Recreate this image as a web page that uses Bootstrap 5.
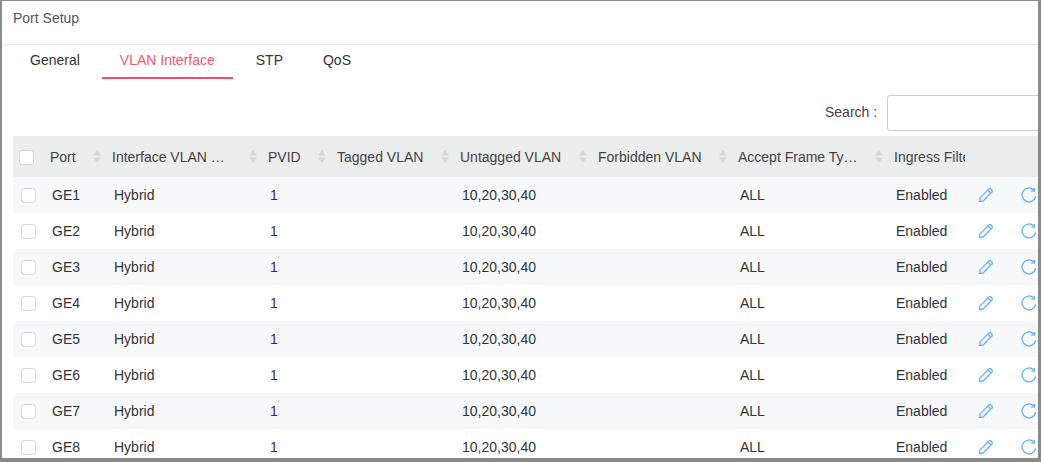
<!DOCTYPE html>
<html lang="en">
<head>
<meta charset="utf-8">
<title>Port Setup</title>
<link href="https://cdn.jsdelivr.net/npm/bootstrap@5.3.0/dist/css/bootstrap.min.css" rel="stylesheet">
<style>
html,body{height:100%;margin:0;overflow:hidden;background:#fff}
body{font-family:"Liberation Sans",Arial,sans-serif;font-size:14px;color:#333}
.frame{height:462px;border-style:solid;border-color:#8a8a8a;border-width:1px 3px 4px 2px;overflow:hidden;background:#fff}
.head-title{height:44px;padding:7px 0 0 11px;color:#555;font-size:14px;line-height:20px;margin-left:2px;border-bottom:1px solid #e8e8e8}
.head-title span{margin-left:-2px}
.tab-row{padding-left:10px;gap:4px;height:34px}
.tab-row .nav-link{padding:6px 18px 0;height:34px;line-height:19px;color:#333;font-size:14px;border-bottom:2px solid transparent}
.tab-row .nav-link.active{color:#ef5a70;border-bottom-color:#ee4f66;margin-right:1px}
.find-row{height:36px;margin-top:16px;gap:10px;justify-content:flex-start;padding-left:823px}
.find-row label{color:#444;white-space:nowrap;flex:none;padding-bottom:2px}
.find-box{width:320px;height:36px;flex:none;border:1px solid #ccc;border-radius:3px;box-shadow:none}
.port-table{table-layout:fixed;width:1100px;margin:5px 0 0 11px;border-collapse:collapse}
.port-table th{height:41px;background:#eceded;font-weight:400;color:#444;padding:2px 8px 0;white-space:nowrap;overflow:hidden}
.port-table td{height:36px;padding:0 10px;color:#333;white-space:nowrap;border:0}
.port-table tr.alt td{background:#f7f8fa}
.port-table th.sel{padding-left:6px}
.port-table td.sel{padding-left:8px}
.port-table td.act{padding:0}
.tick{width:15px;height:15px;margin:0;display:block;border:1px solid #d4d4d4;border-radius:3px;background:#fff}
.th-in{display:flex;align-items:center;justify-content:space-between}
.th-txt{overflow:hidden;white-space:nowrap}
.sorter{flex:none;width:8px;height:13px;margin-right:-5px;margin-top:-2px;color:#d8d8d8}
.acts{display:flex;gap:27px;padding-left:5px;align-items:center}
.acts svg{display:block;flex:none;width:16px;height:16px;fill:none;stroke:#6db5f5;stroke-width:1.4}
</style>
</head>
<body>
<div class="frame">
  <div class="head-title"><span>Port Setup</span></div>
  <nav class="nav tab-row">
    <a class="nav-link" href="#">General</a>
    <a class="nav-link active" href="#">VLAN Interface</a>
    <a class="nav-link" href="#">STP</a>
    <a class="nav-link" href="#">QoS</a>
  </nav>
  <div class="d-flex align-items-center find-row">
    <label for="q">Search :</label>
    <input id="q" class="form-control find-box" type="text">
  </div>
  <table class="port-table">
    <colgroup><col style="width:29px"><col style="width:62px"><col style="width:156px"><col style="width:69px"><col style="width:123px"><col style="width:138px"><col style="width:140px"><col style="width:156px"><col style="width:87px"><col style="width:140px"></colgroup>
    <thead><tr>
      <th class="sel"><input class="form-check-input tick" type="checkbox" aria-label="Select all"></th>
      <th><div class="th-in"><span class="th-txt">Port</span><svg class="sorter" viewBox="0 0 8 13"><path fill="currentColor" d="M4 0l4 5.500H0zM4 13L0 7.500h8z"/></svg></div></th>
      <th><div class="th-in"><span class="th-txt">Interface VLAN …</span><svg class="sorter" viewBox="0 0 8 13"><path fill="currentColor" d="M4 0l4 5.500H0zM4 13L0 7.500h8z"/></svg></div></th>
      <th><div class="th-in"><span class="th-txt">PVID</span><svg class="sorter" viewBox="0 0 8 13"><path fill="currentColor" d="M4 0l4 5.500H0zM4 13L0 7.500h8z"/></svg></div></th>
      <th><div class="th-in"><span class="th-txt">Tagged VLAN</span><svg class="sorter" viewBox="0 0 8 13"><path fill="currentColor" d="M4 0l4 5.500H0zM4 13L0 7.500h8z"/></svg></div></th>
      <th><div class="th-in"><span class="th-txt">Untagged VLAN</span><svg class="sorter" viewBox="0 0 8 13"><path fill="currentColor" d="M4 0l4 5.500H0zM4 13L0 7.500h8z"/></svg></div></th>
      <th><div class="th-in"><span class="th-txt">Forbidden VLAN</span><svg class="sorter" viewBox="0 0 8 13"><path fill="currentColor" d="M4 0l4 5.500H0zM4 13L0 7.500h8z"/></svg></div></th>
      <th><div class="th-in"><span class="th-txt">Accept Frame Ty…</span><svg class="sorter" viewBox="0 0 8 13"><path fill="currentColor" d="M4 0l4 5.500H0zM4 13L0 7.500h8z"/></svg></div></th>
      <th><div class="th-in"><span class="th-txt">Ingress Filter</span></div></th>
      <th></th>
    </tr></thead>
    <tbody>
      <tr class="alt"><td class="sel"><input class="form-check-input tick" type="checkbox" aria-label="GE1"></td><td>GE1</td><td>Hybrid</td><td>1</td><td></td><td>10,20,30,40</td><td></td><td>ALL</td><td>Enabled</td><td class="act"><div class="acts"><svg viewBox="0 0 16 16"><path d="M1.500 14.500l.5-3.500 8.900-8.900a1.500 1.500 0 0 1 2.100 0l.9.9a1.500 1.500 0 0 1 0 2.100L5 14zM10 3.200l2.800 2.800"/></svg><svg viewBox="0 0 16 16"><path d="M14.700 9.500A6.900 6.900 0 1 1 12.800 3M13.400 .8v3.300h-3.300"/></svg></div></td></tr>
      <tr><td class="sel"><input class="form-check-input tick" type="checkbox" aria-label="GE2"></td><td>GE2</td><td>Hybrid</td><td>1</td><td></td><td>10,20,30,40</td><td></td><td>ALL</td><td>Enabled</td><td class="act"><div class="acts"><svg viewBox="0 0 16 16"><path d="M1.500 14.500l.5-3.500 8.900-8.900a1.500 1.500 0 0 1 2.100 0l.9.9a1.500 1.500 0 0 1 0 2.100L5 14zM10 3.200l2.800 2.800"/></svg><svg viewBox="0 0 16 16"><path d="M14.700 9.500A6.900 6.900 0 1 1 12.800 3M13.400 .8v3.300h-3.300"/></svg></div></td></tr>
      <tr class="alt"><td class="sel"><input class="form-check-input tick" type="checkbox" aria-label="GE3"></td><td>GE3</td><td>Hybrid</td><td>1</td><td></td><td>10,20,30,40</td><td></td><td>ALL</td><td>Enabled</td><td class="act"><div class="acts"><svg viewBox="0 0 16 16"><path d="M1.500 14.500l.5-3.500 8.900-8.900a1.500 1.500 0 0 1 2.100 0l.9.9a1.500 1.500 0 0 1 0 2.100L5 14zM10 3.200l2.800 2.800"/></svg><svg viewBox="0 0 16 16"><path d="M14.700 9.500A6.900 6.900 0 1 1 12.800 3M13.400 .8v3.300h-3.300"/></svg></div></td></tr>
      <tr><td class="sel"><input class="form-check-input tick" type="checkbox" aria-label="GE4"></td><td>GE4</td><td>Hybrid</td><td>1</td><td></td><td>10,20,30,40</td><td></td><td>ALL</td><td>Enabled</td><td class="act"><div class="acts"><svg viewBox="0 0 16 16"><path d="M1.500 14.500l.5-3.500 8.900-8.900a1.500 1.500 0 0 1 2.100 0l.9.9a1.500 1.500 0 0 1 0 2.100L5 14zM10 3.200l2.800 2.800"/></svg><svg viewBox="0 0 16 16"><path d="M14.700 9.500A6.900 6.900 0 1 1 12.800 3M13.400 .8v3.300h-3.300"/></svg></div></td></tr>
      <tr class="alt"><td class="sel"><input class="form-check-input tick" type="checkbox" aria-label="GE5"></td><td>GE5</td><td>Hybrid</td><td>1</td><td></td><td>10,20,30,40</td><td></td><td>ALL</td><td>Enabled</td><td class="act"><div class="acts"><svg viewBox="0 0 16 16"><path d="M1.500 14.500l.5-3.500 8.900-8.900a1.500 1.500 0 0 1 2.100 0l.9.9a1.500 1.500 0 0 1 0 2.100L5 14zM10 3.200l2.800 2.800"/></svg><svg viewBox="0 0 16 16"><path d="M14.700 9.500A6.900 6.900 0 1 1 12.800 3M13.400 .8v3.300h-3.300"/></svg></div></td></tr>
      <tr><td class="sel"><input class="form-check-input tick" type="checkbox" aria-label="GE6"></td><td>GE6</td><td>Hybrid</td><td>1</td><td></td><td>10,20,30,40</td><td></td><td>ALL</td><td>Enabled</td><td class="act"><div class="acts"><svg viewBox="0 0 16 16"><path d="M1.500 14.500l.5-3.500 8.900-8.900a1.500 1.500 0 0 1 2.100 0l.9.9a1.500 1.500 0 0 1 0 2.100L5 14zM10 3.200l2.800 2.800"/></svg><svg viewBox="0 0 16 16"><path d="M14.700 9.500A6.900 6.900 0 1 1 12.800 3M13.400 .8v3.300h-3.300"/></svg></div></td></tr>
      <tr class="alt"><td class="sel"><input class="form-check-input tick" type="checkbox" aria-label="GE7"></td><td>GE7</td><td>Hybrid</td><td>1</td><td></td><td>10,20,30,40</td><td></td><td>ALL</td><td>Enabled</td><td class="act"><div class="acts"><svg viewBox="0 0 16 16"><path d="M1.500 14.500l.5-3.500 8.900-8.900a1.500 1.500 0 0 1 2.100 0l.9.9a1.500 1.500 0 0 1 0 2.100L5 14zM10 3.200l2.800 2.800"/></svg><svg viewBox="0 0 16 16"><path d="M14.700 9.500A6.900 6.900 0 1 1 12.800 3M13.400 .8v3.300h-3.300"/></svg></div></td></tr>
      <tr><td class="sel"><input class="form-check-input tick" type="checkbox" aria-label="GE8"></td><td>GE8</td><td>Hybrid</td><td>1</td><td></td><td>10,20,30,40</td><td></td><td>ALL</td><td>Enabled</td><td class="act"><div class="acts"><svg viewBox="0 0 16 16"><path d="M1.500 14.500l.5-3.500 8.900-8.900a1.500 1.500 0 0 1 2.100 0l.9.9a1.500 1.500 0 0 1 0 2.100L5 14zM10 3.200l2.800 2.800"/></svg><svg viewBox="0 0 16 16"><path d="M14.700 9.500A6.900 6.900 0 1 1 12.800 3M13.400 .8v3.300h-3.300"/></svg></div></td></tr>
    </tbody>
  </table>
</div>
</body>
</html>
